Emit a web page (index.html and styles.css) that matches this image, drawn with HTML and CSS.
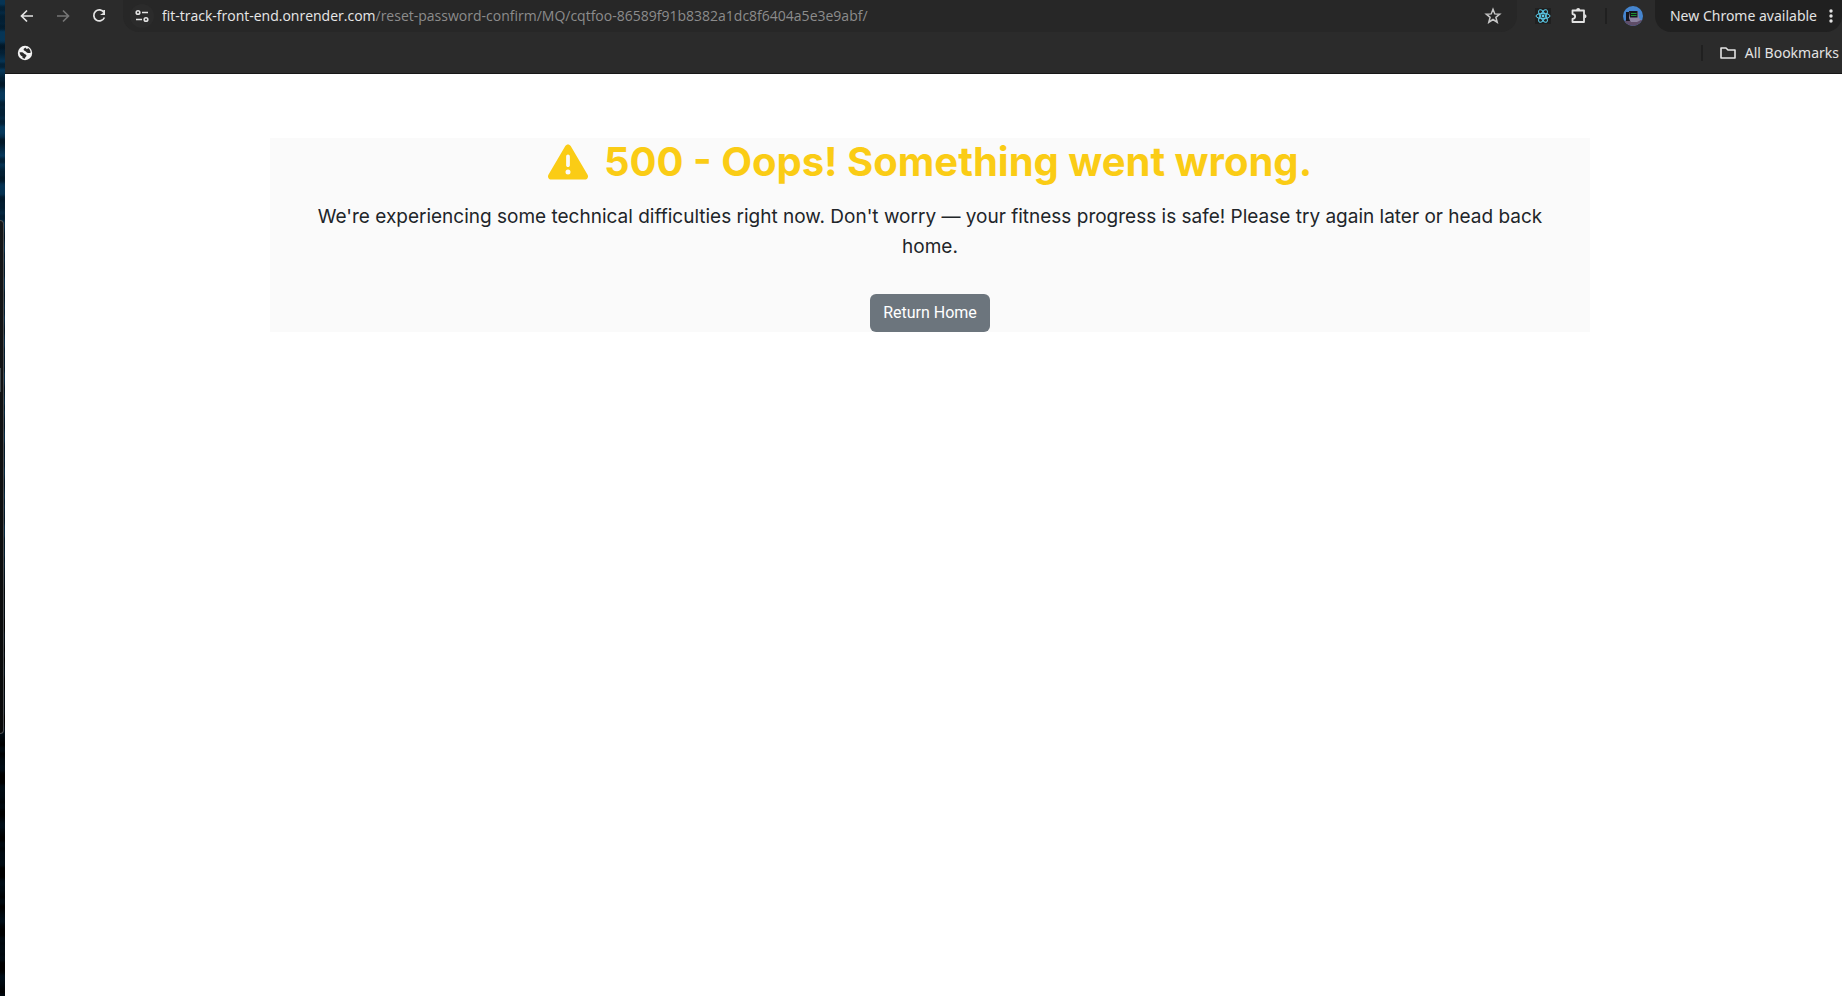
FILE: index.html
```html
<!DOCTYPE html>
<html lang="en">
<head>
<meta charset="utf-8">
<title>500 - Something went wrong</title>
<link rel="stylesheet" href="styles.css">
</head>
<body>
<div class="desktop">
  <div class="wallpaper" aria-hidden="true"><div class="dock"><div class="dock-handle"></div></div></div>
  <div class="browser">
    <header class="chrome">
      <div class="toolbar">
        <nav class="nav" aria-label="Navigation">
          <button class="icon-button" type="button" aria-label="Back"><svg width="20" height="20" viewBox="0 0 20 20"><path d="M16 10H5M10 4.500L4.500 10L10 15.500" fill="none" stroke="#e3e3e3" stroke-width="1.700"/></svg></button>
          <button class="icon-button" type="button" aria-label="Forward" disabled><svg width="20" height="20" viewBox="0 0 20 20"><path d="M4 10H15M10 4.500L15.500 10L10 15.500" fill="none" stroke="#757575" stroke-width="1.700"/></svg></button>
          <button class="icon-button" type="button" aria-label="Reload"><svg width="20" height="20" viewBox="0 0 20 20"><path d="M15 6.500A5.500 5.500 0 1 0 15.400 11.500" fill="none" stroke="#e3e3e3" stroke-width="1.700"/><path d="M16 4V9H11L13.500 7.300H14.300V4Z" fill="#e3e3e3"/></svg></button>
        </nav>
        <div class="omnibox">
          <button class="site-info" type="button" aria-label="View site information"><svg width="16" height="16" viewBox="0 0 16 16" fill="none" stroke="#e3e3e3" stroke-width="1.600"><circle cx="4" cy="4.500" r="1.800"/><path d="M8 4.500H14M2 11.500H8"/><circle cx="12" cy="11.500" r="1.800"/></svg></button>
          <div class="url" role="textbox" aria-label="Address" tabindex="0"><span class="host">fit-track-front-end.onrender.com</span>/reset-password-confirm/MQ/cqtfoo-86589f91b8382a1dc8f6404a5e3e9abf/</div>
          <button class="icon-button" type="button" aria-label="Bookmark this tab"><svg width="18" height="18" viewBox="0 0 18 18"><path d="M9 2.300L10.800 6.900L15.700 7.200L11.900 10.300L13.200 15.200L9 12.500L4.800 15.200L6.100 10.300L2.300 7.200L7.200 6.900Z" fill="none" stroke="#c7c7c7" stroke-width="1.500"/></svg></button>
        </div>
        <div class="extensions">
          <button class="icon-button" type="button" aria-label="React Developer Tools"><svg width="16" height="16" viewBox="0 0 16 16"><path fill="#202020" d="M0 0H16V16H0Z"/><g fill="none" stroke="#5ccfee" stroke-width="1"><ellipse cx="8" cy="8" rx="7" ry="2.700"/><ellipse cx="8" cy="8" rx="7" ry="2.700" transform="rotate(60 8 8)"/><ellipse cx="8" cy="8" rx="7" ry="2.700" transform="rotate(120 8 8)"/></g><circle cx="8" cy="8" r="1.400" fill="#5ccfee"/></svg></button>
          <button class="icon-button" type="button" aria-label="Extensions"><svg width="18" height="18" viewBox="0 0 18 18"><path d="M2.500 3.500H14V15H2.500V12C6 11.500 6 7.500 2.500 7Z" fill="none" stroke="#e3e3e3" stroke-width="1.800" stroke-linejoin="round"/><path d="M6.200 3A2 2 0 0 1 10.200 3ZM14.500 7.200A2 2 0 0 1 14.500 11.200Z" fill="#e3e3e3"/></svg></button>
          <span class="divider"></span>
          <button class="icon-button" type="button" aria-label="Profile"><svg width="20" height="20" viewBox="0 0 20 20"><clipPath id="avatar"><circle cx="10" cy="10" r="10"/></clipPath><g clip-path="url(#avatar)"><path fill="#4585cf" d="M0 0H20V20H0Z"/><path fill="#5e4d68" d="M0 15L5 14H16L20 14V20H0Z"/><path fill="#8c83a0" d="M6 5H15L16 12L18 14L14 16H8L6 13Z"/><path fill="#15151d" d="M6 5H14.500V11.500H7ZM3 6H6V12L7 15H3Z"/><path d="M8 7.500H13.500M8 9.500H13.500" stroke="#1e9030"/></g></svg></button>
        </div>
        <button class="update" type="button">New Chrome available<svg width="4" height="16" viewBox="0 0 4 16" fill="#e3e3e3"><circle cx="2" cy="3" r="1.700"/><circle cx="2" cy="8" r="1.700"/><circle cx="2" cy="13" r="1.700"/></svg></button>
      </div>
      <div class="bookmarks">
        <button class="icon-button" type="button" aria-label="Bookmark"><svg width="16" height="16" viewBox="0 0 16 16"><circle cx="8" cy="8" r="7.200" fill="#f3f3f3"/><path d="M2.500 7.500C4 7 6 7 7 8.500C7.500 9.500 9.500 9 9.500 11C9 12 8 12 8 13.800L5.500 13V11.500C4 11 3 10 2.500 7.500ZM8.500 2.500C7 3.500 6 4 7 5.500C9 5.500 9 8 11 8H13.500C14 6 12.500 3.500 11 3C10.500 4.500 9 4 8.500 2.500Z" fill="#2b2b2b"/></svg></button>
        <div class="bookmarks-end"><span class="divider"></span><button class="all-bookmarks" type="button"><svg width="18" height="16" viewBox="0 0 18 16"><path d="M2 13V3H7L9 5H16V13Z" fill="none" stroke="#e3e3e3" stroke-width="1.600" stroke-linejoin="round"/></svg>All Bookmarks</button></div>
      </div>
    </header>
    <main class="page">
      <section class="error">
        <h1 class="error-title"><svg width="40" height="40" viewBox="0 0 512 512" fill="#facc15" aria-hidden="true"><path d="M256 32c14.200 0 27.300 7.500 34.500 19.800l216 368c7.300 12.400 7.300 27.700.2 40.100S486.300 480 472 480H40c-14.300 0-27.600-7.700-34.700-20.100s-7-27.800.2-40.100l216-368C228.700 39.500 241.800 32 256 32zm0 128c-13.300 0-24 10.700-24 24v112c0 13.300 10.700 24 24 24s24-10.700 24-24V184c0-13.300-10.700-24-24-24zm32 224a32 32 0 1 0-64 0 32 32 0 1 0 64 0z"/></svg>500 - Oops! Something went wrong.</h1>
        <p class="error-text">We're experiencing some technical difficulties right now. Don't worry — your fitness progress is safe! Please try again later or head back home.</p>
        <a class="button" href="#">Return Home</a>
      </section>
    </main>
  </div>
</div>
</body>
</html>
```

FILE: styles.css
```css
* { box-sizing: border-box; }
body { margin: 0; background: #fff; color: #212529; }
button { border: 0; padding: 0; background: none; font: inherit; color: inherit; }
svg { display: block; flex: none; }

.desktop { display: flex; min-height: 100vh; }
.wallpaper {
  flex: none;
  width: 5px;
  padding-top: 220px;
  background:
    repeating-linear-gradient(#0000 0 4px, #00101c88 7px 10px, #0000 13px 19px),
    repeating-linear-gradient(#0000 0 9px, #00101c99 16px 22px, #0000 31px),
    linear-gradient(#063454, #06395c 140px, #042c49 230px, #03263d 550px, #000 600px);
}
.dock {
  width: 4px;
  height: 514px;
  padding-top: 147px;
  border: 1px solid #4b4d4f;
  border-left: 0;
  border-radius: 0 4px 4px 0;
  background: linear-gradient(#151719, #080909);
}
.dock-handle { width: 1px; height: 24px; background: #41484c; }
.browser { flex: 1; min-width: 0; display: flex; flex-direction: column; }

.chrome {
  background: #2b2b2b;
  border-bottom: 1px solid #171717;
  color: #e3e3e3;
  font: 14px/20px "Noto Sans", sans-serif;
}
.toolbar { display: flex; align-items: center; height: 32px; }
.nav { display: flex; gap: 16px; padding: 0 14px 0 12px; }
.icon-button { display: flex; justify-content: center; }
.nav .icon-button, .extensions .icon-button { width: 20px; }
.omnibox {
  flex: 1;
  min-width: 0;
  display: flex;
  align-items: center;
  align-self: stretch;
  gap: 8px;
  padding: 0 15px 0 7px;
  background: #272727;
  border-radius: 0 0 16px 16px;
}
.site-info { display: flex; padding: 4px; border-radius: 12px; background: #2b2b2b; }
.url { flex: 1; min-width: 0; overflow: hidden; white-space: nowrap; color: #8c8c8c; font-family: "Open Sans", sans-serif; }
.host { color: #e8e8e8; }
.extensions { display: flex; align-items: center; gap: 16px; padding: 0 12px 0 16px; }
.divider { width: 2px; height: 16px; background: #202020; }
.update {
  display: flex;
  align-items: center;
  align-self: stretch;
  gap: 12px;
  padding: 0 9px 0 15px;
  border-radius: 0 0 16px 16px;
  background: #202020;
}
.bookmarks { display: flex; align-items: center; justify-content: space-between; height: 41px; padding: 0 3px 0 12px; }
.bookmarks-end, .all-bookmarks { display: flex; align-items: center; }
.bookmarks-end { gap: 16px; }
.all-bookmarks { gap: 8px; }

.page { padding: 64px 0 0 13px; }
.error { max-width: 1320px; margin: 0 auto; background: #fafafa; text-align: center; }
.error-title {
  display: flex;
  justify-content: center;
  align-items: center;
  gap: 16px;
  margin: 0 0 16px;
  color: #facc15;
  font: 700 40px/48px Inter, sans-serif;
}
.error-text { margin: 0 0 32px; padding: 0 24px; font: 19px/30px Inter, sans-serif; }
.button {
  display: inline-block;
  vertical-align: top;
  padding: 7px 13px;
  border-radius: 6px;
  background: #6c757d;
  color: #fff;
  font: 16px/24px Roboto, sans-serif;
  text-decoration: none;
}
```
